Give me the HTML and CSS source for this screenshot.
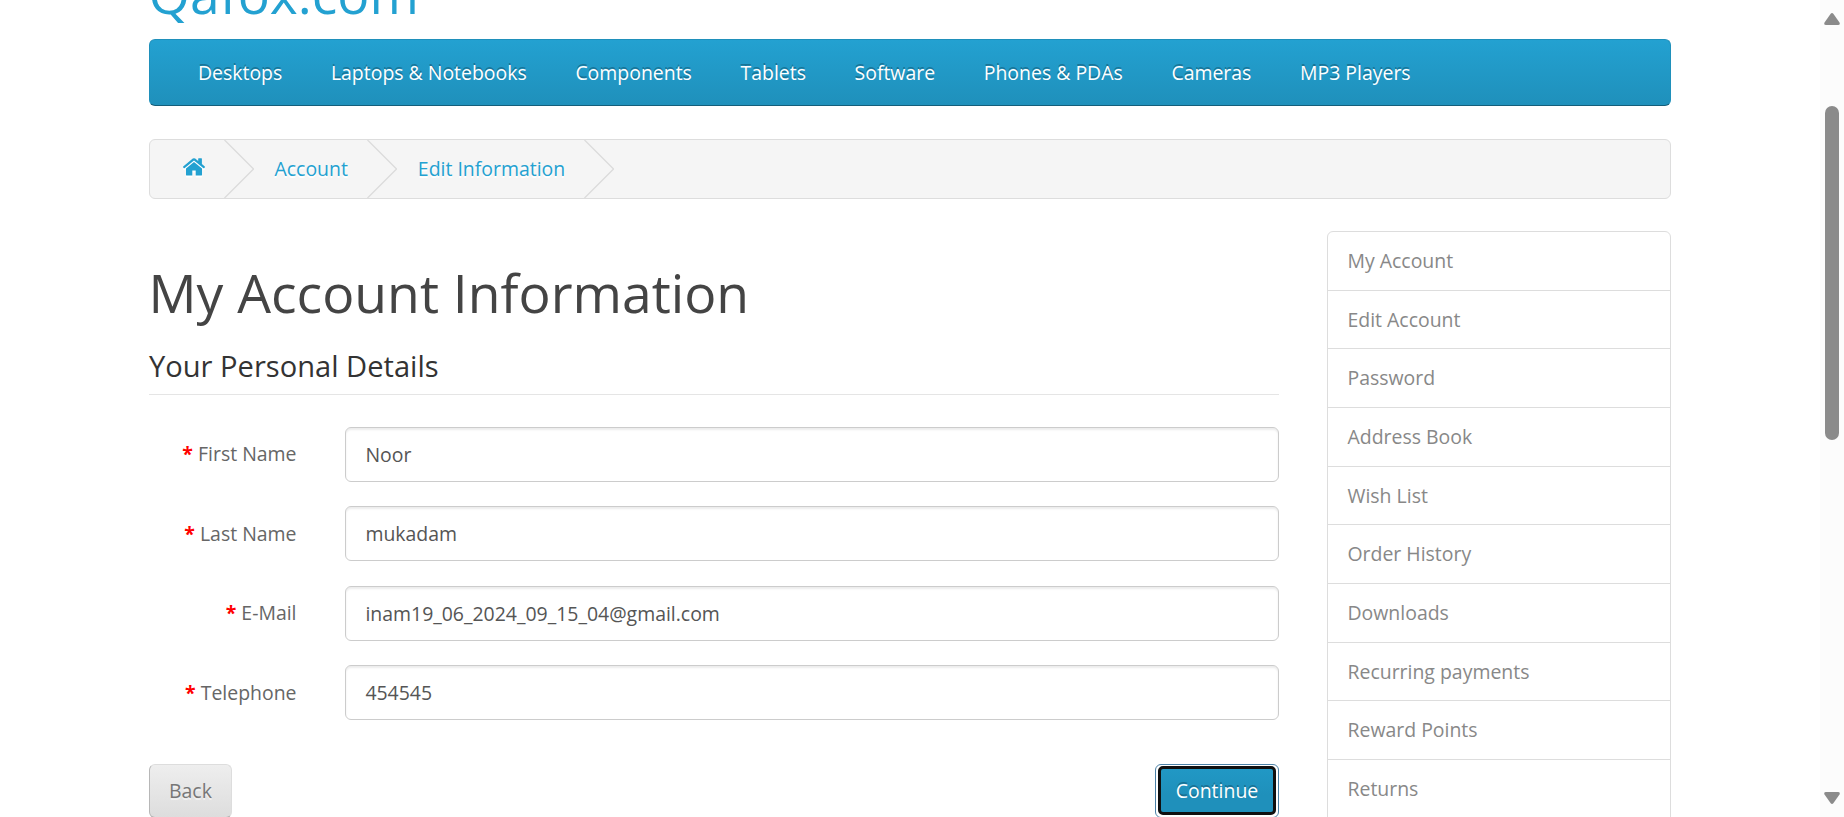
FILE: index.html
```html
<!DOCTYPE html>
<html lang="en">
<head>
<meta charset="utf-8">
<title>My Account Information</title>
<link rel="stylesheet" href="styles.css">
</head>
<body>
<div class="page">
  <div class="container">
    <header class="logo"><a>Qafox.com</a></header>
    <nav class="menu">
      <a>Desktops</a><a>Laptops &amp; Notebooks</a><a>Components</a><a>Tablets</a><a>Software</a><a>Phones &amp; PDAs</a><a>Cameras</a><a>MP3 Players</a>
    </nav>
    <div class="breadcrumb">
      <a class="home"><svg width="22" height="18" viewBox="0 0 22 18"><g fill="#23a1d1"><path d="M11 4 3 10.600V16.700q0 .9.900.9H9.300V12.600h3.400v5H18.100q.9 0 .9-.9V10.600z"/><path d="M21.800 8.600 18.900 6.100V.8q0-.5-.5-.5h-2.700q-.5 0-.5.500V3L12.200.6q-1.200-.9-2.400 0L.2 8.600q-.3.300-.1.600l.8 1q.3.300.6 0L11 2.400l9.500 7.800q.3.300.6 0l.8-1q.2-.3-.1-.6z"/></g></svg></a>
      <svg class="chevron" width="30" height="58" viewBox="0 0 30 58"><path d="M.5 0 29.500 29 .5 58" fill="none" stroke="#dbdbdb" stroke-width="1.300"/></svg>
      <a>Account</a>
      <svg class="chevron" width="30" height="58" viewBox="0 0 30 58"><path d="M.5 0 29.500 29 .5 58" fill="none" stroke="#dbdbdb" stroke-width="1.300"/></svg>
      <a>Edit Information</a>
      <svg class="chevron" width="30" height="58" viewBox="0 0 30 58"><path d="M.5 0 29.500 29 .5 58" fill="none" stroke="#dbdbdb" stroke-width="1.300"/></svg>
    </div>
    <div class="columns">
      <main class="content">
        <h1>My Account Information</h1>
        <h2>Your Personal Details</h2>
        <form>
          <div class="row"><label for="first">First Name</label><input id="first" type="text" value="Noor"></div>
          <div class="row"><label for="last">Last Name</label><input id="last" type="text" value="mukadam"></div>
          <div class="row"><label for="email">E-Mail</label><input id="email" type="text" value="inam19_06_2024_09_15_04@gmail.com"></div>
          <div class="row"><label for="phone">Telephone</label><input id="phone" type="text" value="454545"></div>
          <div class="buttons"><a class="back">Back</a><a class="continue"><span>Continue</span></a></div>
        </form>
      </main>
      <aside class="sidebar">
        <a>My Account</a><a>Edit Account</a><a>Password</a><a>Address Book</a><a>Wish List</a><a>Order History</a><a>Downloads</a><a>Recurring payments</a><a>Reward Points</a><a>Returns</a>
      </aside>
    </div>
  </div>
  <div class="scrollbar">
    <svg width="16" height="12" viewBox="0 0 16 12"><path d="M6.500 1Q8-.8 9.500 1L15.500 9.500Q16.500 12 14 12H2Q-.5 12 .5 9.500z" fill="#8b8b8b"/></svg>
    <div class="thumb"></div>
    <svg class="down" width="16" height="12" viewBox="0 0 16 12"><path d="M6.500 11Q8 12.800 9.500 11L15.500 2.500Q16.500 0 14 0H2Q-.5 0 .5 2.500z" fill="#8b8b8b"/></svg>
  </div>
</div>
</body>
</html>
```
FILE: styles.css
```css
* { box-sizing: border-box; }
body {
  margin: 0;
  height: 817px;
  overflow: hidden;
  background: #fff;
  font: 400 19.45px/32px "Open Sans", sans-serif;
  color: #666;
}
.page { display: flex; justify-content: space-between; height: 817px; overflow: hidden; }
.container { width: 1522px; margin-left: 149px; }
.logo {
  height: 39px;
  display: flex;
  align-items: flex-end;
  color: #23a1d1;
  font-size: 53.4px;
  line-height: 74px;
}
.logo a { margin: 0 0 8px -.5px; }
.menu {
  display: flex;
  gap: 48.65px;
  height: 67px;
  padding: 17px 48px 0;
  border: 1px solid #1f90bb;
  border-bottom-color: #145e7a;
  border-radius: 6px;
  background: linear-gradient(#23a1d1, #1f90bb);
  color: #fff;
  text-shadow: 0 -2px 0 rgba(0, 0, 0, .25);
}
.menu a { white-space: nowrap; }
.breadcrumb {
  display: flex;
  height: 60px;
  margin-top: 33px;
  padding-left: 32.5px;
  border: 1px solid #ddd;
  border-radius: 6px;
  background: #f5f5f5;
  color: #23a1d1;
  line-height: 58px;
  text-shadow: 0 2px 0 #fff;
}
.home { display: flex; align-items: center; }
.home svg { margin-bottom: 4px; filter: drop-shadow(0 2px 0 #fff); }
.chevron { margin: 0 20.8px 0 19.2px; flex: none; }
.columns { display: flex; justify-content: space-between; margin-top: 32px; }
.content { width: 1130px; padding-top: 32px; }
h1 {
  margin: 0 0 0 -.5px;
  height: 72px;
  color: #444;
  font-size: 53.45px;
  font-weight: 400;
  line-height: 60px;
}
h2 {
  margin: 0 0 32px;
  padding-top: 9px;
  height: 60px;
  border-bottom: 1px solid #e5e5e5;
  color: #333;
  font-size: 29.1px;
  font-weight: 400;
  line-height: 44px;
}
.row { display: flex; height: 55px; margin-bottom: 24.4px; }
label { width: 147.5px; margin-right: 48.5px; padding-top: 11.4px; text-align: right; }
label::before { content: "* "; color: #f00; font-weight: 700; }
input {
  width: 934px;
  height: 55px;
  padding: 0 19.4px;
  border: 1px solid #ccc;
  border-radius: 6px;
  box-shadow: inset 0 2px 2px rgba(0, 0, 0, .075);
  background: #fff;
  color: #555;
  font: inherit;
}
.buttons { display: flex; justify-content: space-between; padding-top: 19.4px; }
.back {
  height: 54px;
  padding: 10px 19px;
  border: 1px solid #ddd;
  border-color: #ddd #ddd #b3b3b3 #b7b7b7;
  border-radius: 6px;
  background: linear-gradient(#eee, #ddd);
  color: #777;
  text-shadow: 0 2px 0 rgba(255, 255, 255, .5);
}
.continue {
  width: 124px;
  height: 54px;
  padding: 1px 2px 2px;
  border: 1px solid #4c82a8;
  border-radius: 6px;
}
.continue span {
  display: block;
  height: 49px;
  border: 3px solid #101010;
  border-radius: 5px;
  background: linear-gradient(#2198c5, #1f90bb 60%);
  color: #fff;
  line-height: 43px;
  text-align: center;
  text-shadow: 0 -2px 0 rgba(0, 0, 0, .25);
}
.sidebar {
  width: 344px;
  height: 620px;
  border: 1px solid #ddd;
  border-radius: 6px;
}
.sidebar a {
  display: block;
  height: 58.68px;
  padding-left: 19.5px;
  border-bottom: 1px solid #ddd;
  color: #888;
  line-height: 58.7px;
}
.scrollbar {
  display: flex;
  flex-direction: column;
  align-items: center;
  width: 24px;
  padding: 13px 0;
  background: #fcfcfc;
}
.thumb { width: 14px; height: 334px; margin-top: 81px; border-radius: 7px; background: #8b8b8b; }
.down { margin-top: auto; }
```
